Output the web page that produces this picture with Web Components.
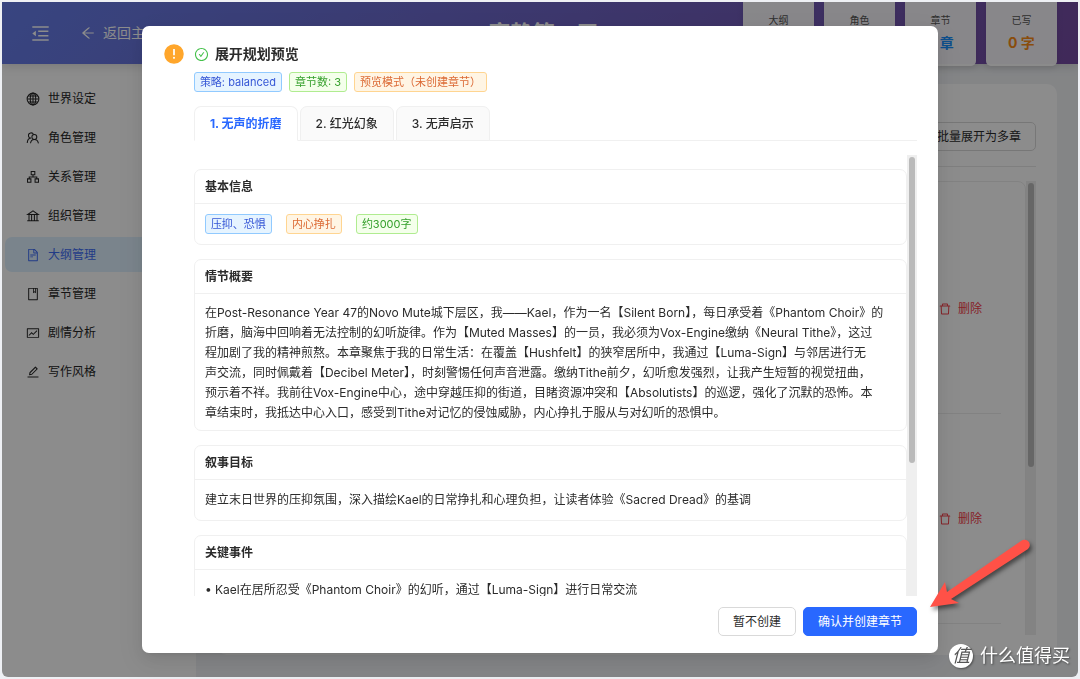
<!DOCTYPE html>
<html lang="zh-CN">
<head>
<meta charset="utf-8">
<title>大纲管理</title>
<style>
*{
    box-sizing: border-box;
}
body{
    margin: 0;
    padding: 2px;
    background: #eef0f4;
    color: #2b2b2b;
    font: 12px/20px Inter, "Noto Sans CJK SC", sans-serif;
}
</style>
</head>
<body>

<app-frame>
  <app-header slot="header" data-title="寂静第一天">
    <stat-card data-label="大纲" data-value="1 条"></stat-card>
    <stat-card data-label="角色" data-value="5 个"></stat-card>
    <stat-card data-label="章节" data-value="0 章"></stat-card>
    <stat-card data-label="已写" data-value="0 字" data-tone="orange"></stat-card>
  </app-header>

  <side-menu slot="menu">
    <menu-item data-icon="globe">世界设定</menu-item>
    <menu-item data-icon="team">角色管理</menu-item>
    <menu-item data-icon="tree">关系管理</menu-item>
    <menu-item data-icon="bank">组织管理</menu-item>
    <menu-item data-icon="file" selected>大纲管理</menu-item>
    <menu-item data-icon="book">章节管理</menu-item>
    <menu-item data-icon="fund">剧情分析</menu-item>
    <menu-item data-icon="edit">写作风格</menu-item>
  </side-menu>

  <outline-panel></outline-panel>
</app-frame>

<plan-modal>
  <span slot="title">展开规划预览</span>
  <color-tag slot="tags" data-tone="blue">策略: balanced</color-tag>
  <color-tag slot="tags" data-tone="green">章节数: 3</color-tag>
  <color-tag slot="tags" data-tone="orange">预览模式（未创建章节）</color-tag>

  <tab-item slot="tabs" selected>1. 无声的折磨</tab-item>
  <tab-item slot="tabs">2. 红光幻象</tab-item>
  <tab-item slot="tabs">3. 无声启示</tab-item>

  <info-card data-title="基本信息" data-layout="tags">
    <color-tag data-tone="blue">压抑、恐惧</color-tag>
    <color-tag data-tone="orange">内心挣扎</color-tag>
    <color-tag data-tone="green">约3000字</color-tag>
  </info-card>
  <info-card data-title="情节概要" data-layout="long">在Post-Resonance Year 47的Novo Mute城下层区，我——Kael，作为一名【Silent Born】，每日承受着《Phantom Choir》的<br>折磨，脑海中回响着无法控制的幻听旋律。作为【Muted Masses】的一员，我必须为Vox-Engine缴纳《Neural Tithe》，这过<br>程加剧了我的精神煎熬。本章聚焦于我的日常生活：在覆盖【Hushfelt】的狭窄居所中，我通过【Luma-Sign】与邻居进行无<br>声交流，同时佩戴着【Decibel Meter】，时刻警惕任何声音泄露。缴纳Tithe前夕，幻听愈发强烈，让我产生短暂的视觉扭曲，<br>预示着不祥。我前往Vox-Engine中心，途中穿越压抑的街道，目睹资源冲突和【Absolutists】的巡逻，强化了沉默的恐怖。本<br>章结束时，我抵达中心入口，感受到Tithe对记忆的侵蚀威胁，内心挣扎于服从与对幻听的恐惧中。</info-card>
  <info-card data-title="叙事目标">建立末日世界的压抑氛围，深入描绘Kael的日常挣扎和心理负担，让读者体验《Sacred Dread》的基调</info-card>
  <info-card data-title="关键事件">• Kael在居所忍受《Phantom Choir》的幻听，通过【Luma-Sign】进行日常交流</info-card>

  <ui-button slot="footer">暂不创建</ui-button>
  <ui-button slot="footer" data-type="primary">确认并创建章节</ui-button>
</plan-modal>

<pointer-arrow></pointer-arrow>
<site-mark data-glyph="值">什么值得买</site-mark>

<script>
// icon shapes, all on a 1024 grid
const line = 'fill="none" stroke="currentColor" stroke-width="76"';
const icons = {
    fold: '<path d="M400 370h496v72H400zM400 582h496v72H400zM112 160h800v72H112zM112 792h800v72H112zM112 512L286 650V374z"/>',
    back: '<path d="M872 474H286.9l350.2-304c5.6-4.9 2.2-14-5.2-14h-88.5c-3.9 0-7.6 1.4-10.5 3.9L155 487.8a31.96 31.96 0 000 48.3L535.1 866c1.5 1.3 3.3 2 5.2 2h91.5c7.4 0 10.8-9.2 5.2-14L286.900 550H872c4.400 0 8-3.600 8-8v-60c0-4.400-3.600-8-8-8z"/>',
    globe: `<g ${line}><circle cx="512" cy="512" r="430"/><ellipse cx="512" cy="512" rx="200" ry="430"/><path d="M512 82v860M82 512h860M150 300h724M150 724h724"/></g>`,
    team: `<g ${line}><path d="M360 520a190 190 0 1 1 190-250M90 880c10-200 120-340 270-360"/><circle cx="610" cy="440" r="180"/><path d="M330 900c20-170 120-280 280-280s270 110 300 280"/></g>`,
    tree: `<g ${line}><path d="M380 110h264v240H380zM110 650h250v240H110zM664 650h250v240H664zM512 350v160M235 650V510h554v140"/></g>`,
    bank: `<g ${line}><path d="M130 400L512 140l382 260zM220 400v440M410 400v440M614 400v440M804 400v440M90 866h844"/></g>`,
    file: '<path d="M854.600 288.600L639.400 73.400c-6-6-14.100-9.400-22.600-9.400H192c-17.700 0-32 14.300-32 32v832c0 17.700 14.300 32 32 32h640c17.700 0 32-14.300 32-32V311.300c0-8.500-3.400-16.700-9.400-22.700zM790.200 326H602V137.800L790.200 326zm1.800 562H232V136h302v216a42 42 0 0042 42h216v494zM312 618h200v64H312zM312 482h400v64H312z"/>',
    book: '<path d="M832 64H192c-17.700 0-32 14.300-32 32v832c0 17.700 14.300 32 32 32h640c17.700 0 32-14.300 32-32V96c0-17.700-14.300-32-32-32zm-260 72h96v209.900L621.500 312 572 347.400V136zm220 752H232V136h280v296.900c0 3.300 1 6.600 3 9.300a15.900 15.900 0 0022.300 3.700l83.800-59.900 81.400 59.400c2.700 2 6 3.100 9.400 3.100 8.800 0 16-7.200 16-16V136h64v752z"/>',
    fund: '<path d="M926 164H94c-17.700 0-32 14.300-32 32v640c0 17.700 14.300 32 32 32h832c17.700 0 32-14.300 32-32V196c0-17.700-14.300-32-32-32zm-40 632H134V236h752v560zM233 720l178-179 120 120 303-303-48-48-255 255-120-120-226 227z"/>',
    edit: '<path d="M257.700 752c2 0 4-.2 6-.5L431.900 722c2-.4 3.900-1.300 5.300-2.800l423.900-423.900a9.960 9.960 0 000-14.100L694.900 114.900c-1.900-1.900-4.400-2.900-7.100-2.900s-5.200 1-7.100 2.900L256.800 538.800c-1.500 1.500-2.400 3.300-2.800 5.300l-29.500 168.200a33.500 33.500 0 009.400 29.800c6.600 6.400 14.900 9.900 23.800 9.900zm67.400-174.400L687.800 215l73.300 73.300-362.700 362.600-88.900 15.700 15.600-89zM112 836h800v76H112z"/>',
    trash: '<path d="M360 184h304v72h72v-80c0-35.300-28.700-64-64-64H352c-35.300 0-64 28.700-64 64v80h72v-72zm504 72H160c-17.700 0-32 14.300-32 32v32c0 4.400 3.600 8 8 8h60.400l24.700 523c1.600 34.100 29.800 61 63.900 61h454c34.200 0 62.300-26.800 63.900-61l24.700-523H888c4.400 0 8-3.600 8-8v-32c0-17.700-14.300-32-32-32zM731.300 840H292.700l-24.200-512h487l-24.200 512z"/>',
    check: '<path d="M699 353h-46.900c-10.200 0-19.900 4.900-25.900 13.300L469 584.300l-71.200-98.800c-6-8.300-15.600-13.300-25.900-13.300H325c-6.500 0-10.300 7.400-6.500 12.700l124.600 172.800a31.800 31.800 0 0051.700 0l210.600-292c3.900-5.300.1-12.700-6.400-12.700z"/><path d="M512 64C264.600 64 64 264.600 64 512s200.600 448 448 448 448-200.600 448-448S759.400 64 512 64zm0 820c-205.400 0-372-166.600-372-372s166.600-372 372-372 372 166.600 372 372-166.600 372-372 372z"/>',
    warn: '<circle cx="512" cy="512" r="500"/><path fill="#fff" d="M468 250h88v330h-88z"/><circle fill="#fff" cx="512" cy="710" r="52"/>'
};

function icon(name, size){
    return `<svg width="${size}" height="${size}" viewBox="0 0 1024 1024" fill="currentColor" aria-hidden="true">${icons[name]}</svg>`;
}

const base = `
*{
    box-sizing: border-box;
}
button{
    margin: 0;
    padding: 0;
    border: 0;
    background: none;
    color: inherit;
    font: inherit;
    cursor: pointer;
}
svg{
    display: block;
    flex: none;
}
`;

// attaches an open shadow root and fills it
class BaseElement extends HTMLElement{
    constructor(){
        super();
        this.attachShadow({mode: "open"});
    }

    connectedCallback(){
        this.shadowRoot.innerHTML = `<style>${base}${this.css()}</style>${this.html()}`;
    }

    css(){ return ""; }
    html(){ return "<slot></slot>"; }
}

class AppFrame extends BaseElement{
    css(){
        return `
        :host{
            display: flex;
            flex-direction: column;
            height: calc(100vh - 4px);
            overflow: hidden;
            border-radius: 0 0 6px 6px;
            background: #f0f2f5;
        }
        .body{
            display: flex;
            flex: 1;
            min-height: 0;
        }
        main{
            flex: 1;
            min-width: 0;
            padding: 20px 21px 22px;
        }
        `;
    }
    html(){
        return `<slot name="header"></slot>
        <div class="body"><slot name="menu"></slot><main><slot></slot></main></div>`;
    }
}

class AppHeader extends BaseElement{
    css(){
        return `
        /* the fixed row lets the stat cards hang over the bar's edges */
        :host{
            display: grid;
            grid-template-columns: 1fr auto 1fr;
            grid-template-rows: 62px;
            align-items: center;
            flex: none;
            height: 62px;
            padding: 0 21px 0 28px;
            background: linear-gradient(135deg, #667eea 0%, #764ba2 100%);
            box-shadow: 0 2px 10px rgba(0,0,0,.15);
            color: #fff;
            position: relative;
        }
        .left{
            display: flex;
            align-items: center;
            gap: 29px;
        }
        .left button{
            display: flex;
            align-items: center;
            gap: 7px;
            font-size: 14px;
        }
        h2{
            margin: 0;
            font-size: 22px;
            line-height: 24px;
            font-weight: 600;
        }
        .stats{
            display: flex;
            justify-content: flex-end;
            gap: 10px;
        }
        `;
    }
    html(){
        return `<div class="left">
            <button type="button" aria-label="收起菜单">${icon("fold", 21)}</button>
            <button type="button">${icon("back", 16)}返回主页</button>
        </div>
        <h2>${this.getAttribute("data-title")}</h2>
        <div class="stats"><slot></slot></div>`;
    }
}

class StatCard extends BaseElement{
    css(){
        return `
        :host{
            display: flex;
            flex-direction: column;
            align-items: center;
            width: 71px;
            height: 66px;
            padding-top: 12px;
            border-radius: 0 0 5px 5px;
            background: rgba(255,255,255,.95);
            box-shadow: 0 2px 6px rgba(0,0,0,.1);
            color: #1890ff;
        }
        :host([data-tone="orange"]){
            color: #fa8c16;
        }
        small{
            color: #555;
            font-size: 10px;
            line-height: 16px;
        }
        b{
            font-size: 14px;
            line-height: 30px;
        }
        `;
    }
    html(){
        return `<small>${this.getAttribute("data-label")}</small><b>${this.getAttribute("data-value")}</b>`;
    }
}

class SideMenu extends BaseElement{
    css(){
        return `
        :host{
            display: block;
            flex: none;
            width: 194px;
            background: #fff;
        }
        nav{
            display: flex;
            flex-direction: column;
            gap: 4px;
            padding: 17px 3px;
        }
        `;
    }
    html(){
        return `<nav><slot></slot></nav>`;
    }
}

class MenuItem extends BaseElement{
    css(){
        return `
        :host{
            display: block;
        }
        a{
            display: flex;
            align-items: center;
            gap: 8px;
            height: 35px;
            padding-left: 21px;
            border-radius: 7px;
            color: #262626;
            text-decoration: none;
        }
        :host([selected]) a{
            background: #dff1ff;
            color: #3d6cf5;
        }
        `;
    }
    html(){
        return `<a href="#">${icon(this.getAttribute("data-icon"), 14)}<slot></slot></a>`;
    }
}

class ScrollRail extends BaseElement{
    css(){
        return `
        :host{
            display: block;
            flex: none;
            width: 10px;
            padding: 2px;
            background: #efefef;
        }
        div{
            height: var(--thumb, 50%);
            border-radius: 3px;
            background: #bababa;
        }
        `;
    }
    html(){
        return `<div></div>`;
    }
}

class OutlinePanel extends BaseElement{
    css(){
        return `
        :host{
            display: flex;
            flex-direction: column;
            height: 100%;
            padding: 38px 21px 20px;
            border-radius: 10px;
            background: #fff;
        }
        .bar{
            display: flex;
            justify-content: flex-end;
            padding-bottom: 15px;
            border-bottom: 1px solid #e8e8e8;
        }
        .scroll{
            display: flex;
            flex: 1;
            min-height: 0;
            margin-top: 14px;
            overflow: hidden;
            --thumb: 63%;
        }
        ul{
            flex: 1;
            height: 480px;
            margin: 0;
            padding: 22px 24px;
            border: 1px solid #ededed;
            border-radius: 8px;
            list-style: none;
        }
        li{
            display: flex;
            align-items: center;
            justify-content: flex-end;
            height: 210px;
            padding-right: 19px;
            border-bottom: 1px solid #ededed;
        }
        li button{
            display: flex;
            align-items: center;
            gap: 6px;
            color: #f5404a;
        }
        `;
    }
    html(){
        const row = `<li><button type="button">${icon("trash", 14)}删除</button></li>`;
        return `<div class="bar"><ui-button>批量展开为多章</ui-button></div>
        <div class="scroll"><ul>${row}${row}</ul><scroll-rail></scroll-rail></div>`;
    }
}

class UiButton extends BaseElement{
    css(){
        return `
        :host{
            display: block;
        }
        button{
            height: 29px;
            padding: 0 14px;
            border: 1px solid #d9d9d9;
            border-radius: 5px;
            background: #fff;
            line-height: 20px;
            white-space: nowrap;
        }
        :host([data-type="primary"]) button{
            border-color: #2968ff;
            background: #2968ff;
            color: #fff;
        }
        `;
    }
    html(){
        return `<button type="button"><slot></slot></button>`;
    }
}

class ColorTag extends BaseElement{
    css(){
        return `
        :host{
            display: block;
            padding: 0 5px;
            border: 1px solid;
            border-radius: 3px;
            font-size: 11px;
            line-height: 18px;
            white-space: nowrap;
        }
        :host([data-tone="blue"]){
            border-color: #91caff;
            background: #e6f4ff;
            color: #3657d6;
        }
        :host([data-tone="green"]){
            border-color: #b0ec90;
            background: #f4ffeb;
            color: #35a02c;
        }
        :host([data-tone="orange"]){
            border-color: #ffd591;
            background: #fff5e4;
            color: #dc6a35;
        }
        `;
    }
}

class TabItem extends BaseElement{
    css(){
        return `
        :host{
            display: block;
            margin-bottom: -1px;
        }
        button{
            height: 35px;
            padding: 0 15px;
            border: 1px solid #f0f0f0;
            border-radius: 7px 7px 0 0;
            background: #fafafa;
            font-weight: 500;
        }
        :host([selected]) button{
            border-bottom-color: #fff;
            background: #fff;
            color: #2968ff;
            font-weight: 700;
        }
        `;
    }
    html(){
        const selected = this.hasAttribute("selected");
        return `<button type="button" role="tab" aria-selected="${selected}"><slot></slot></button>`;
    }
}

class InfoCard extends BaseElement{
    css(){
        return `
        :host{
            display: block;
            border: 1px solid #f0f0f0;
            border-radius: 7px;
            background: #fff;
        }
        h4{
            margin: 0;
            padding: 7px 10px 6px;
            border-bottom: 1px solid #f0f0f0;
            font-size: 12px;
            line-height: 20px;
            font-weight: 700;
        }
        .body{
            padding: 10px;
        }
        :host([data-layout="long"]) .body{
            padding: 9px 10px 7px;
        }
        :host([data-layout="tags"]) .body{
            display: flex;
            gap: 14px;
        }
        `;
    }
    html(){
        return `<h4>${this.getAttribute("data-title")}</h4><div class="body"><slot></slot></div>`;
    }
}

class PlanModal extends BaseElement{
    css(){
        return `
        /* the mask dims the whole app behind the dialog */
        :host{
            display: flex;
            justify-content: center;
            align-items: flex-start;
            position: fixed;
            inset: 2px;
            padding-top: 24px;
            border-radius: 0 0 6px 6px;
            background: rgba(0,0,0,.45);
        }
        .dialog{
            display: flex;
            gap: 10px;
            width: 74%;
            min-width: 560px;
            padding: 17px 21px 17px 22px;
            border-radius: 7px;
            background: #fff;
            box-shadow: 0 6px 16px rgba(0,0,0,.08), 0 3px 6px -4px rgba(0,0,0,.12), 0 9px 28px 8px rgba(0,0,0,.05);
        }
        .warn{
            padding-top: 1px;
            color: #ffa62b;
        }
        .content{
            flex: 1;
            min-width: 0;
        }
        h3{
            display: flex;
            align-items: center;
            gap: 6px;
            margin: 0;
            font-size: 14px;
            line-height: 22px;
            font-weight: 600;
        }
        h3 svg{
            color: #45c14b;
        }
        .tags{
            display: flex;
            gap: 7px;
            margin-top: 7px;
        }
        .tabs{
            display: flex;
            gap: 2px;
            margin: 14px 0;
            border-bottom: 1px solid #f0f0f0;
        }
        .scroll{
            display: flex;
            height: 65vh;
            overflow: hidden;
            --thumb: 70%;
        }
        .cards{
            display: flex;
            flex: 1;
            flex-direction: column;
            gap: 14px;
            min-width: 0;
            padding-top: 14px;
        }
        footer{
            display: flex;
            justify-content: flex-end;
            gap: 7px;
            margin-top: 11px;
        }
        `;
    }
    html(){
        return `<div class="dialog" role="dialog" aria-modal="true">
            <div class="warn">${icon("warn", 20)}</div>
            <div class="content">
                <h3>${icon("check", 15)}<slot name="title"></slot></h3>
                <div class="tags"><slot name="tags"></slot></div>
                <div class="tabs" role="tablist"><slot name="tabs"></slot></div>
                <div class="scroll"><div class="cards"><slot></slot></div><scroll-rail></scroll-rail></div>
                <footer><slot name="footer"></slot></footer>
            </div>
        </div>`;
    }
}

class PointerArrow extends BaseElement{
    css(){
        return `
        :host{
            position: fixed;
            right: 46px;
            bottom: 64px;
            filter: drop-shadow(2px 3px 2px rgba(0,0,0,.5));
            pointer-events: none;
        }
        `;
    }
    html(){
        return `<svg width="104" height="76" viewBox="0 0 104 76" aria-hidden="true">
            <path fill="#ff5147" d="M0 68L15 43L17 53L91 2A5 5 0 0 1 98 10L21 60L29 64Z"/>
        </svg>`;
    }
}

class SiteMark extends BaseElement{
    css(){
        return `
        :host{
            display: flex;
            align-items: center;
            gap: 7px;
            position: fixed;
            right: 10px;
            bottom: 10px;
            color: #fff;
            font-size: 18px;
            line-height: 26px;
            text-shadow: 1px 1px 2px rgba(0,0,0,.5);
        }
        i{
            width: 24px;
            height: 24px;
            border-radius: 50%;
            background: #fff;
            box-shadow: 1px 1px 2px rgba(0,0,0,.4);
            color: #555;
            line-height: 24px;
            text-align: center;
            text-shadow: none;
        }
        `;
    }
    html(){
        return `<i>${this.getAttribute("data-glyph")}</i><slot></slot>`;
    }
}

customElements.define("app-frame", AppFrame);
customElements.define("app-header", AppHeader);
customElements.define("stat-card", StatCard);
customElements.define("side-menu", SideMenu);
customElements.define("menu-item", MenuItem);
customElements.define("scroll-rail", ScrollRail);
customElements.define("outline-panel", OutlinePanel);
customElements.define("ui-button", UiButton);
customElements.define("color-tag", ColorTag);
customElements.define("tab-item", TabItem);
customElements.define("info-card", InfoCard);
customElements.define("plan-modal", PlanModal);
customElements.define("pointer-arrow", PointerArrow);
customElements.define("site-mark", SiteMark);
</script>
</body>
</html>
